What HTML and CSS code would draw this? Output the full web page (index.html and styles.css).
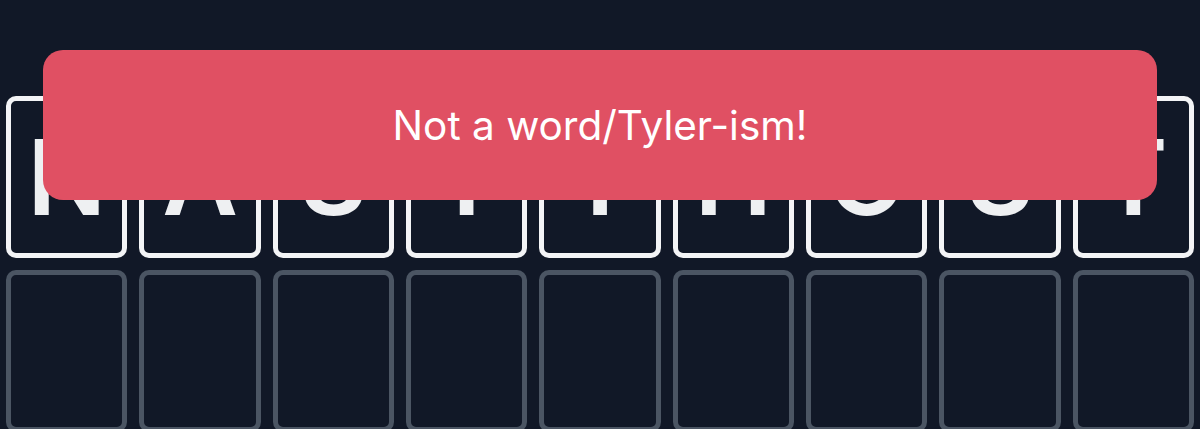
FILE: index.html
```html
<!DOCTYPE html>
<html>
<head>
<meta charset="utf-8">
<link rel="stylesheet" href="styles.css">
</head>
<body>
<div class="board">
  <div class="row">
    <div class="tile filled">N</div>
    <div class="tile filled">A</div>
    <div class="tile filled">S</div>
    <div class="tile filled">T</div>
    <div class="tile filled">T</div>
    <div class="tile filled">H</div>
    <div class="tile filled">O</div>
    <div class="tile filled">S</div>
    <div class="tile filled">T</div>
  </div>
  <div class="row">
    <div class="tile"></div>
    <div class="tile"></div>
    <div class="tile"></div>
    <div class="tile"></div>
    <div class="tile"></div>
    <div class="tile"></div>
    <div class="tile"></div>
    <div class="tile"></div>
    <div class="tile"></div>
  </div>
</div>
<div class="toast">Not a word/Tyler-ism!</div>
</body>
</html>
```
FILE: styles.css
```css
html, body {
  margin: 0;
  padding: 0;
  background: #111827;
  height: 100%;
  overflow: hidden;
}
body {
  font-family: Inter, "Liberation Sans", sans-serif;
  position: relative;
}
.board {
  display: flex;
  flex-direction: column;
  gap: 12px;
  padding: 96px 6px 0 6px;
}
.row {
  display: grid;
  grid-template-columns: repeat(9, 1fr);
  gap: 12px;
  height: 162px;
}
.tile {
  box-sizing: border-box;
  border: 5px solid #4b5563;
  border-radius: 10px;
  display: flex;
  align-items: center;
  justify-content: center;
  color: #eef0f2;
  font-size: 104px;
  font-weight: 600;
  line-height: 1;
}
.tile.filled {
  border-color: #f3f4f6;
}
.toast {
  position: absolute;
  left: 43px;
  top: 50px;
  width: 1114px;
  height: 150px;
  background: #e05063;
  border-radius: 20px;
  display: flex;
  align-items: center;
  justify-content: center;
  color: #ffffff;
  font-size: 40.5px;
  font-weight: 400;
}
```
